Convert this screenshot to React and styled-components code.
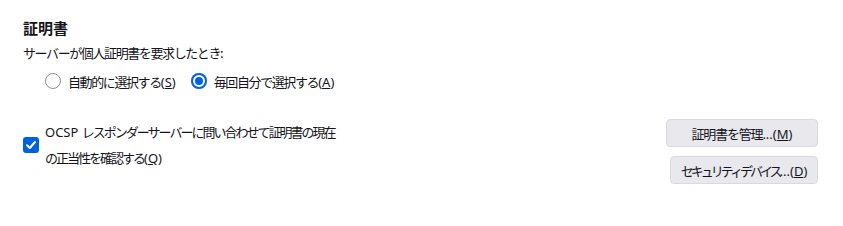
import styled, { createGlobalStyle } from "styled-components";

const GlobalStyle = createGlobalStyle`
  html, body {
    margin: 0;
    background: #ffffff;
  }
  body {
    font-family: "Noto Sans CJK JP", "Noto Sans", sans-serif;
    color: #15141a;
    font-size: 13px;
  }
`;

const Page = styled.div`
  padding: 18px 25px 0 23px;
`;

const Title = styled.h2`
  margin: 0;
  font-size: 15px;
  font-weight: 700;
  line-height: 20px;
`;

const Subtitle = styled.div`
  margin-top: 6px;
  line-height: 18px;
  letter-spacing: -1.4px;
`;

const Latin = styled.span`
  letter-spacing: 0;
  font-family: "Noto Sans", sans-serif;
`;

const RadioRow = styled.div`
  display: flex;
  align-items: center;
  gap: 15px;
  height: 24px;
  margin-top: 7px;
  padding-left: 22px;
`;

const RadioItem = styled.label`
  display: flex;
  align-items: center;
  gap: 7px;
  letter-spacing: -1.4px;
`;

const RadioDot = styled.span`
  width: 16px;
  height: 16px;
  box-sizing: border-box;
  border-radius: 50%;
  flex-shrink: 0;
  background: ${(p) => (p.checked ? "#0061e0" : "#ffffff")};
  border: ${(p) => (p.checked ? "none" : "1px solid #8f8f9d")};
  box-shadow: ${(p) =>
    p.checked ? "inset 0 0 0 2px #0061e0, inset 0 0 0 4px #ffffff" : "none"};
`;

const Lower = styled.div`
  display: flex;
  justify-content: space-between;
  align-items: flex-start;
  margin-top: 26px;
`;

const CheckItem = styled.label`
  display: flex;
  align-items: center;
  gap: 6px;
`;

const CheckBox = styled.span`
  width: 16px;
  height: 16px;
  border-radius: 3px;
  background: #0061e0;
  display: flex;
  align-items: center;
  justify-content: center;
  flex-shrink: 0;
`;

const CheckText = styled.div`
  line-height: 25px;
  letter-spacing: -2px;
  white-space: nowrap;
`;

const Buttons = styled.div`
  display: flex;
  flex-direction: column;
  align-items: flex-end;
  gap: 9px;
`;

const Button = styled.button`
  font-family: inherit;
  font-size: 13px;
  color: #15141a;
  height: 28px;
  width: ${(p) => p.w}px;
  padding: 0;
  background: #e9e9ed;
  border: 1px solid #dadade;
  border-radius: 4px;
  letter-spacing: ${(p) => p.ls}px;
  white-space: nowrap;
  cursor: pointer;
`;

export default function App() {
  return (
    <>
      <GlobalStyle />
      <Page>
        <Title>証明書</Title>
        <Subtitle>サーバーが個人証明書を要求したとき:</Subtitle>
        <RadioRow>
          <RadioItem>
            <RadioDot />
            <span>
              自動的に選択する<Latin>(<u>S</u>)</Latin>
            </span>
          </RadioItem>
          <RadioItem>
            <RadioDot checked />
            <span>
              毎回自分で選択する<Latin>(<u>A</u>)</Latin>
            </span>
          </RadioItem>
        </RadioRow>
        <Lower>
          <CheckItem>
            <CheckBox>
              <svg width="12" height="12" viewBox="0 0 12 12">
                <path
                  d="M2 6.2 L4.8 9 L10 3"
                  fill="none"
                  stroke="#ffffff"
                  strokeWidth="2"
                  strokeLinecap="round"
                  strokeLinejoin="round"
                />
              </svg>
            </CheckBox>
            <CheckText>
              <Latin>OCSP </Latin>レスポンダーサーバーに問い合わせて証明書の現在
              <br />
              の正当性を確認する<Latin>(<u>Q</u>)</Latin>
            </CheckText>
          </CheckItem>
          <Buttons>
            <Button w={152} ls={-1.2}>
              証明書を管理<Latin>...(<u>M</u>)</Latin>
            </Button>
            <Button w={148} ls={-3}>
              セキュリティデバイス<Latin>...(<u>D</u>)</Latin>
            </Button>
          </Buttons>
        </Lower>
      </Page>
    </>
  );
}
